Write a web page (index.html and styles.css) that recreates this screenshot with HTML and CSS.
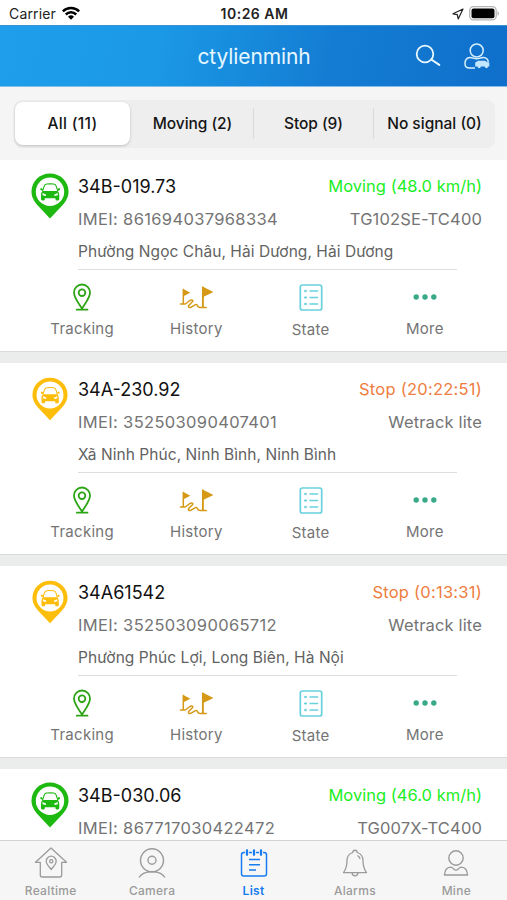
FILE: index.html
```
<!DOCTYPE html>
<html lang="en">
<head>
<meta charset="utf-8">
<title>ctylienminh</title>
<link rel="stylesheet" href="styles.css">
</head>
<body>
<svg class="symbols" aria-hidden="true">
  <symbol id="pin-car" viewBox="0 0 38 46">
    <path fill="currentColor" d="M19 .5C8.500.5.500 8.500.500 18.500c0 5.500 2.500 9.500 5.800 13.500L19 45.500 31.700 32c3.300-4 5.800-8 5.800-13.500C37.500 8.500 29.500.5 19 .5z"/>
    <circle cx="19" cy="18.800" r="14.200" fill="#fff"/>
    <g class="car-body" transform="translate(1.300 1.200) scale(.93)">
      <path fill="none" stroke="currentColor" stroke-width="1.200" d="M11 18.500l1.700-5.500c.5-1.700 1.300-2.200 2.800-2.400 2.500-.3 5-.3 7.500 0 1.500.2 2.300.7 2.800 2.400l1.700 5.500"/>
      <path fill="currentColor" d="M8.700 15.200h1.800l.8 1.300-.5 1.200-2.100-.6zM29.800 15.200H28l-.8 1.300.5 1.200 2.100-.6zM11.500 18h15.400c1.700 1 2.100 2.400 2.100 4.500v4.300c0 1-.4 1.400-1.300 1.400h-1.500c-.9 0-1.300-.5-1.300-1.400v-.9H13.500v.9c0 .9-.4 1.400-1.300 1.400h-1.500c-.9 0-1.300-.4-1.300-1.400v-4.300c0-2.100.4-3.500 2.100-4.500z"/>
      <path fill="#fff" d="M11 20.300l3.700 1.400v1.800l-3.700-.8zM27.400 20.300l-3.700 1.400v1.800l3.700-.8z"/>
    </g>
  </symbol>
  <symbol id="tracking" viewBox="0 0 20 28">
    <g fill="none" stroke="currentColor" stroke-width="1.800" stroke-linecap="round">
      <path d="M10 25.500C7 20.500 2 15 2 9.500a8 8 0 0 1 16 0c0 5.500-5 11-8 16z"/>
      <circle cx="10" cy="9.700" r="3.300"/>
      <path d="M4.800 26.700h10.700"/>
    </g>
  </symbol>
  <symbol id="history" viewBox="0 0 34 24">
    <g fill="none" stroke="currentColor" stroke-width="1.500" stroke-linecap="round" stroke-linejoin="round">
      <path d="M4.300 3.500v14M1.500 18h4.800l4.600-3.500c1.900-1.200 3.700-.4 2.500 1.300l-3.500 3.500c-1.200 1.700.1 2.800 1.800 2l4.700-2.700c1.100-.5 1.900.1 2.100 1.100.2 1.300 1.200 1.700 2.500 1.700h6.200"/>
      <path stroke-width="1.900" d="M23.900 1.500v19.500"/>
    </g>
    <path fill="currentColor" d="M4 2.700l7.300 4L4 10.500zM23.500.5L34.300 6l-10.800 5.300z"/>
  </symbol>
  <symbol id="state" viewBox="0 0 24 27">
    <g fill="none" stroke="currentColor" stroke-width="1.700">
      <rect x="1.300" y="1" width="21.400" height="25" rx="2"/>
      <path d="M5 7h3M10.500 7h8.700M5 13.500h3M10.500 13.500h8.700M5 20h3M10.500 20h8.700"/>
      <path stroke-width="1" opacity=".5" d="M6.500 5.500v3M6.500 12v3M6.500 18.500v3"/>
    </g>
  </symbol>
  <symbol id="more" viewBox="0 0 24 6">
    <g fill="currentColor"><circle cx="3.200" cy="3" r="2.700"/><circle cx="12" cy="3" r="2.700"/><circle cx="20.800" cy="3" r="2.700"/></g>
  </symbol>
</svg>

<div class="screen">
  <div class="status">
    <div class="carrier">Carrier
      <svg width="18" height="14" viewBox="0 0 18 14"><g fill="none" stroke="#000" stroke-width="2.500"><path d="M.8 5.400a11.600 11.600 0 0 1 16.400 0"/><path d="M3.800 8.500a7.300 7.300 0 0 1 10.400 0"/></g><path d="M9 13.800l-3-3a4.300 4.300 0 0 1 6 0z"/></svg>
    </div>
    <div class="clock">10:26 AM</div>
    <div class="power">
      <svg width="12" height="12" viewBox="0 0 12 12"><path d="M11 1L1 5.800l4.300.9.900 4.300z" fill="none" stroke="#222" stroke-width="1.200" stroke-linejoin="round"/></svg>
      <svg width="31" height="15" viewBox="0 0 31 15"><rect x=".7" y=".7" width="26.500" height="13.200" rx="3.800" fill="#fff" stroke="#b5b5b5" stroke-width="1.300"/><rect x="2.500" y="2.400" width="23" height="9.800" rx="2" /><path d="M28.500 5c2 .8 2 4 0 4.800z" fill="#b5b5b5"/></svg>
    </div>
  </div>

  <header class="header">
    <span></span>
    <h1>ctylienminh</h1>
    <div class="header-icons">
      <svg width="26" height="24" viewBox="0 0 26 24"><g fill="none" stroke="#e9f8ff" stroke-width="1.800" stroke-linecap="round"><circle cx="10" cy="10" r="8.300"/><path d="M16.300 15.500l8 5.400" stroke-width="2"/></g></svg>
      <svg width="26" height="27" viewBox="0 0 26 27"><g fill="none" stroke="#d5efff" stroke-width="1.500"><circle cx="12.700" cy="7.500" r="6.500"/><path d="M11 25H5.500C2.500 25 1 23.300 1 20.700c0-4 2.200-6 5-6.200 1.400-.1 2.200.3 3.200.6 2.300.8 4.700.8 7 0 1-.3 1.800-.7 3.200-.6 2.800.2 4.600 1.900 4.900 4.500"/></g><path fill="#c3e6ff" d="M12.500 18.800l1.700-1.100h6.800l2 1.300 2.300.5v4.100H24a1.600 1.600 0 0 1-3.200 0h-4a1.600 1.600 0 0 1-3.200 0h-2.400v-4z"/></svg>
    </div>
  </header>

  <div class="filter">
    <div class="segments">
      <div class="segment selected">All (11)</div>
      <div class="segment">Moving (2)</div>
      <div class="segment ruled">Stop (9)</div>
      <div class="segment ruled">No signal (0)</div>
    </div>
  </div>

  <main class="list" id="list"></main>

  <nav class="tabs">
    <div class="tab"><svg width="34" height="34" viewBox="0 0 34 34"><g fill="none" stroke="currentColor" stroke-width="1.300" stroke-linejoin="round"><path d="M17 2L1.500 16.300h4.800V29c0 1.300.7 2 2 2h17.400c1.300 0 2-.7 2-2V16.300h4.800z"/><path d="M17.200 23.500c-2-2.800-5-5.200-5-8.300a5 5 0 0 1 10 0c0 3.100-3 5.500-5 8.300z"/><circle cx="17.200" cy="15.300" r="1.600"/></g></svg><span>Realtime</span></div>
    <div class="tab"><svg width="34" height="34" viewBox="0 0 34 34"><g fill="none" stroke="currentColor" stroke-width="1.400"><circle cx="17" cy="14.300" r="11.500"/><circle cx="17" cy="14.300" r="4"/><path d="M4 31.500c2-3.200 6.500-5.700 13-5.700s11 2.500 13 5.700"/></g></svg><span>Camera</span></div>
    <div class="tab active"><svg width="34" height="34" viewBox="0 0 34 34"><g fill="none" stroke="currentColor" stroke-width="1.500"><path d="M8 6.500H6.800c-1.500 0-2.300.8-2.300 2.300v18.900c0 1.500.8 2.300 2.300 2.300h20.400c1.500 0 2.300-.8 2.300-2.300V8.800c0-1.500-.8-2.300-2.300-2.300H26M12 6.500h3M19 6.500h3M12 13.500h11M12 18.700h11M12 23.900h7"/><path stroke-width="2.300" stroke-linecap="round" d="M10 4.300v4.500M17 4.300v4.500M24 4.300v4.500"/></g></svg><span>List</span></div>
    <div class="tab"><svg width="34" height="34" viewBox="0 0 34 34"><g fill="none" stroke="currentColor" stroke-width="1.300" stroke-linejoin="round"><path d="M14.800 6.500c0-3 4.400-3 4.400 0 4 1.200 5.800 4.300 5.800 8.200 0 5.800 1 8.400 3.500 11.900h-23C8 23.100 9 20.500 9 14.700c0-3.900 1.800-7 5.800-8.200zM14 26.800c.3 4 5.700 4 6 0"/><path d="M19.300 9.500c1.700.8 2.500 2 2.800 3.500"/></g></svg><span>Alarms</span></div>
    <div class="tab"><svg width="34" height="34" viewBox="0 0 34 34"><g fill="none" stroke="currentColor" stroke-width="1.400" stroke-linejoin="round"><circle cx="17" cy="12" r="7.200"/><path d="M5.500 29c.2-4.700 2.700-7.700 6.200-7.900 2.200 0 3.300 3 5.300 3s3.100-3 5.300-3c3.500.2 6 3.200 6.200 7.900z"/></g></svg><span>Mine</span></div>
  </nav>
</div>
<script src="list.js"></script>
</body>
</html>
```
FILE: list.js
```
const vehicles = [
  { plate: "34B-019.73", status: "Moving (48.0 km/h)", state: "moving", imei: "861694037968334", model: "TG102SE-TC400", address: "Phường Ngọc Châu, Hải Dương, Hải Dương" },
  { plate: "34A-230.92", status: "Stop (20:22:51)", state: "stopped", imei: "352503090407401", model: "Wetrack lite", address: "Xã Ninh Phúc, Ninh Bình, Ninh Bình" },
  { plate: "34A61542", status: "Stop (0:13:31)", state: "stopped", imei: "352503090065712", model: "Wetrack lite", address: "Phường Phúc Lợi, Long Biên, Hà Nội" },
  { plate: "34B-030.06", status: "Moving (46.0 km/h)", state: "moving", imei: "867717030422472", model: "TG007X-TC400" }
];
const actions = [["tracking", "Tracking"], ["history", "History"], ["state", "State"], ["more", "More"]];

const actionRow = () => `<div class="actions">${actions.map(([id, label]) =>
  `<div class="action ${id}"><div class="icon"><svg><use href="#${id}"/></svg></div><span>${label}</span></div>`).join("")}</div>`;

document.getElementById("list").innerHTML = vehicles.map(v => `
  <article class="card ${v.state}">
    <div class="summary">
      <svg class="pin"><use href="#pin-car"/></svg>
      <div class="info">
        <div class="row title"><span>${v.plate}</span><span class="speed">${v.status}</span></div>
        <div class="row device"><span class="imei">IMEI: ${v.imei}</span><span>${v.model}</span></div>
        ${v.address ? `<div class="row address">${v.address}</div>` : ""}
      </div>
    </div>
    ${v.address ? actionRow() : ""}
  </article>`).join("");
```
FILE: styles.css
```
* { box-sizing: border-box; }
body { margin: 0; background: #fff; color: #111; font-family: Inter, "Liberation Sans", sans-serif; }
svg { display: block; flex: none; }
.symbols { position: absolute; width: 0; height: 0; }
.screen { width: 507px; height: 900px; display: flex; flex-direction: column; overflow: hidden; }

.status { flex: none; height: 25px; display: grid; grid-template-columns: 1fr auto 1fr; align-items: center; padding: 2px 7px 0 9px; font-size: 14px; color: #222; }
.carrier { display: flex; align-items: center; gap: 6px; letter-spacing: .15px; }
.carrier svg { margin-top: -2px; }
.clock { font-weight: 600; letter-spacing: .5px; }
.power { display: flex; justify-content: flex-end; align-items: center; gap: 5px; }

.header { flex: none; height: 62px; display: grid; grid-template-columns: 1fr auto 1fr; align-items: center; padding: 0 17px 0 18px; background: linear-gradient(100deg, #1e9eeb 0%, #1b99e7 30%, #147dd3 65%, #0f6fcb 100%); border-top: 1px solid #3a91cf; border-bottom: 1px solid #85bdea; }
.header h1 { margin: 0; font-size: 21px; font-weight: 400; letter-spacing: -.1px; color: #e6f7ff; }
.header-icons { display: flex; justify-content: flex-end; align-items: center; gap: 23px; }

.filter { flex: none; height: 73px; padding: 13px 12px 0 14px; background: #f5f5f5; }
.segments { height: 48px; display: flex; padding: 2px 0 3px 1px; border-radius: 8px; background: #eee; }
.segment { flex: 1 1 0; display: flex; align-items: center; justify-content: center; font-size: 15.5px; font-weight: 500; color: #151515; white-space: nowrap; letter-spacing: -.05px; }
.segment.selected { flex: 0 0 115px; margin-right: 2px; background: #fff; border-radius: 8px; box-shadow: 0 1px 3px rgba(0, 0, 0, .2); letter-spacing: .35px; }
.segment.ruled { flex: 0 0 120px; border-left: 1px solid #dadada; height: 31px; margin-top: 6px; }
.segment.ruled:last-child { flex-basis: 122px; letter-spacing: 0; }

.list { flex: 1; min-height: 0; overflow: hidden; }
.card { height: 203px; border-bottom: 11px solid #ebecec; box-shadow: inset 0 -1px #d9dbdb; }
.summary { display: flex; height: 110px; padding-left: 31px; }
.pin { width: 38px; height: 46px; margin-top: 13px; }
.moving .pin { color: #1db810; }
.stopped .pin { color: #fdbd0b; }
.stopped .car-body { color: #f29b16; }
.stopped .pin { width: 36px; height: 44px; margin: 14px 1px 0; }
.info { flex: 1; margin-left: 9px; padding-top: 10px; }
.row { display: flex; justify-content: space-between; align-items: center; height: 33px; padding-right: 25px; white-space: nowrap; }
.title { font-size: 18px; height: 32px; }
.speed { font-size: 16.5px; letter-spacing: .02px; }
.moving .speed { color: #20ee24; }
.stopped .speed { color: #ee7d40; letter-spacing: .24px; }
.device { color: #747474; font-size: 16.5px; letter-spacing: .15px; }
.imei { letter-spacing: .34px; }
.address { color: #626262; font-size: 15.5px; letter-spacing: .06px; }
.actions { display: flex; margin: 0 25px; position: relative; }
.actions::before { content: ""; position: absolute; top: -1px; left: 53px; right: 25px; height: 1px; background: #ddd; }
.action { flex: 1; display: flex; flex-direction: column; align-items: center; color: #747474; font-size: 15px; line-height: 20px; letter-spacing: .28px; }
.icon { height: 49px; display: flex; align-items: center; justify-content: center; padding-top: 4px; }
.state .icon { height: 50px; padding-top: 5px; }
.tracking svg { width: 20px; height: 28px; color: #2ca414; }
.history svg { width: 34px; height: 24px; color: #d59917; }
.history .icon { padding-top: 6px; }
.state svg { width: 24px; height: 27px; color: #69d1de; }
.more svg { width: 24px; height: 6px; color: #38aa88; }

.tabs { flex: none; height: 60px; display: flex; background: #f6f6f6; border-top: 1px solid #d3d3d3; }
.tab { flex: 1; display: flex; flex-direction: column; align-items: center; padding-top: 5px; color: #9b9b9b; }
.tab span { font-size: 12px; line-height: 14px; font-weight: 500; letter-spacing: .28px; margin-top: 4px; }
.tab.active { color: #167cf0; }
.tab.active span { font-weight: 600; }
```
